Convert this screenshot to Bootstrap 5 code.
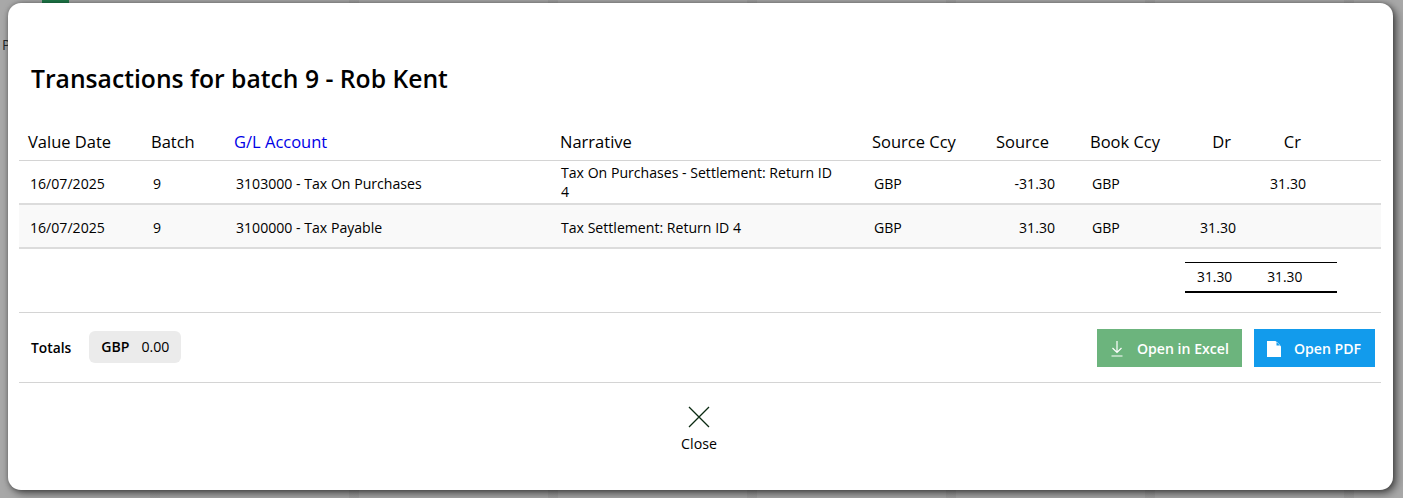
<!DOCTYPE html>
<html lang="en">
<head>
<meta charset="utf-8">
<title>Transactions</title>
<link href="https://cdn.jsdelivr.net/npm/bootstrap@5.3.0/dist/css/bootstrap.min.css" rel="stylesheet">
<style>
html,body{height:498px;overflow:hidden}
body{background:repeating-linear-gradient(90deg,transparent 0 150px,rgba(0,0,0,.05) 150px 160px,transparent 160px 199px),#a8a8a8;font-family:"Open Sans","Noto Sans",sans-serif;color:#000;padding:3px 10px 8px 8px;position:relative}
.behind-letter{position:absolute;left:2px;top:35px;font-size:14px;line-height:20px;color:#23282c}
.behind-icon{position:absolute;left:42px;top:0;width:27px;height:3px;background:#1f7a4a}
.sheet{position:relative;height:487px;background:#fff;border-radius:13px;box-shadow:3px 3px 8px rgba(0,0,0,.6),0 0 4px rgba(0,0,0,.25);padding:0 12px 0 11px}
.sheet-title{font-size:24.7px;font-weight:600;line-height:30px;margin:0;padding:61px 0 0 12px;height:122px}
.grid-head,.grid-row{display:grid;grid-template-columns:123px 83px 326px 312px 116px 96px 94px 70px 71px 1fr}
.grid-head{height:36px;font-size:16.5px;border-bottom:1px solid #d4d4d4;align-items:center;padding-left:9px}
.grid-head div:nth-child(3){color:#0000e6}
.grid-row{height:44px;font-size:14.1px;border-bottom:2px solid #dcdcdc;align-items:center;padding-left:11px;line-height:19px;padding-top:3px}
.grid-row.alt{background:#f9f9f9}
.c-nar{margin-left:-1px}
.c-wrap{padding-right:37px;margin-top:-4px}
.grid-head .c-src,.grid-row .c-src,.grid-head .c-dr,.grid-row .c-dr,.grid-head .c-cr,.grid-row .c-cr{text-align:right}
.grid-head .c-src{padding-right:35px}
.grid-row .c-src{padding-right:31px}
.c-book{padding-left:6px}
.grid-head .c-dr{padding-right:17px}
.grid-row .c-dr{padding-right:14px}
.grid-head .c-cr{padding-right:18px}
.grid-row .c-cr{padding-right:15px}
.sums{width:152px;height:31px;margin:13px 44px 0 auto;border-top:1px solid #000;border-bottom:2px solid #000;font-size:13.8px;padding:0 12px;gap:35px}
.foot{height:71px;margin-top:19px;border-top:1px solid #d4d4d4;border-bottom:1px solid #d4d4d4;padding:0 6px 2px 12px}
.tot-label{font-size:13.8px;font-weight:600;margin-right:18px;padding-top:4px}
.tot-chip{background:#ebebeb;border-radius:6px;height:32px;font-size:14.1px;padding:1px 12px 0;gap:12px}
.act{height:38px;border:0;border-radius:0;color:#fff;font-size:14.1px;font-weight:600;padding:2px 13px 0;gap:13px}
.foot .act{margin-top:2px}
.act-x{background:#6cb47d;width:145px}
.act-p{background:#129bec;width:121px;margin-left:12px}
.act:hover{color:#fff}
.close-wrap{padding-right:2px}
.closer{color:#000;font-size:14.2px;padding-top:23px;line-height:20px}
.closer svg{display:block;margin-bottom:6px}
</style>
</head>
<body>
<span class="behind-letter">P</span><span class="behind-icon"></span>
<div class="sheet">
  <h1 class="sheet-title">Transactions for batch 9 - Rob Kent</h1>
  <div class="grid-head">
    <div>Value Date</div><div>Batch</div><div>G/L Account</div><div>Narrative</div><div>Source Ccy</div><div class="c-src">Source</div><div class="c-book">Book Ccy</div><div class="c-dr">Dr</div><div class="c-cr">Cr</div><div></div>
  </div>
  <div class="grid-row">
    <div>16/07/2025</div><div>9</div><div>3103000 - Tax On Purchases</div><div class="c-nar c-wrap">Tax On Purchases - Settlement: Return ID 4</div><div>GBP</div><div class="c-src">-31.30</div><div class="c-book">GBP</div><div class="c-dr"></div><div class="c-cr">31.30</div><div></div>
  </div>
  <div class="grid-row alt">
    <div>16/07/2025</div><div>9</div><div>3100000 - Tax Payable</div><div class="c-nar">Tax Settlement: Return ID 4</div><div>GBP</div><div class="c-src">31.30</div><div class="c-book">GBP</div><div class="c-dr">31.30</div><div class="c-cr"></div><div></div>
  </div>
  <div class="sums d-flex align-items-center"><span>31.30</span><span>31.30</span></div>
  <div class="foot d-flex align-items-center">
    <span class="tot-label">Totals</span>
    <span class="tot-chip d-inline-flex align-items-center"><span class="fw-semibold">GBP</span><span>0.00</span></span>
    <button type="button" class="btn act act-x d-inline-flex align-items-center ms-auto">
      <svg width="14" height="17" viewBox="0 0 14 17" fill="none" stroke="#fff" stroke-width="1.2"><path d="M7 1v11M2.500 8 7 12.500 11.500 8M1.500 16h11"/></svg>Open in Excel</button>
    <button type="button" class="btn act act-p d-inline-flex align-items-center">
      <svg width="14" height="16" viewBox="0 0 14 16" fill="#fff"><path d="M0 0h8.500L14 5.500V16H0zM9.500 .5v4h4z" fill-rule="evenodd"/></svg>Open PDF</button>
  </div>
  <div class="close-wrap d-flex justify-content-center">
    <a class="closer d-flex flex-column align-items-center text-decoration-none" href="#">
      <svg width="22" height="22" viewBox="0 0 22 22" fill="none" stroke="#0b2a12" stroke-width="1.300"><path d="M1 1l20 20M21 1 1 21"/></svg>Close</a>
  </div>
</div>
<script src="https://cdn.jsdelivr.net/npm/bootstrap@5.3.0/dist/js/bootstrap.bundle.min.js"></script>
</body>
</html>
